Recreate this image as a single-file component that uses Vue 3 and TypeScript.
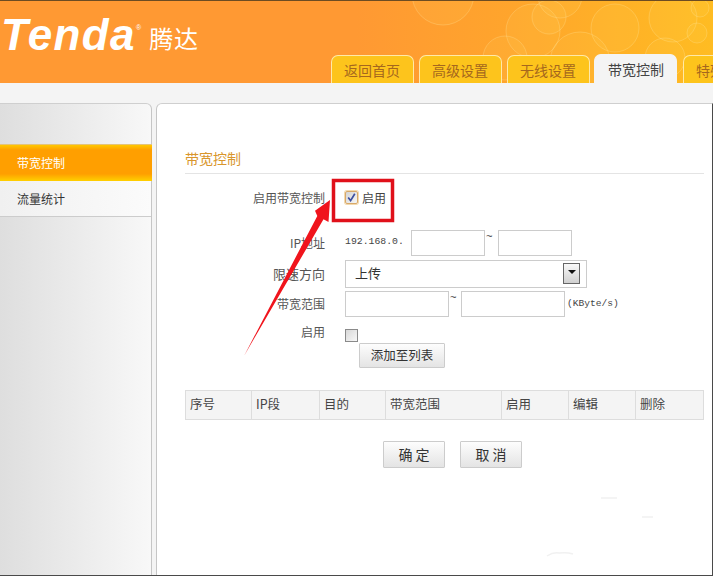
<script setup lang="ts">
const tabs = [
  { label: '返回首页', active: false },
  { label: '高级设置', active: false },
  { label: '无线设置', active: false },
  { label: '带宽控制', active: true },
  { label: '特殊', active: false },
]
const columns = [
  { label: '序号', width: 66 },
  { label: 'IP段', width: 68 },
  { label: '目的', width: 66 },
  { label: '带宽范围', width: 116 },
  { label: '启用', width: 67 },
  { label: '编辑', width: 67 },
  { label: '删除', width: 69 },
]
const bubbles = [
  [443, -6, 31], [533, 31, 27], [549, 17, 17], [505, 58, 22], [580, 62, 30], [615, 28, 24],
  [673, 18, 24], [697, 33, 10], [700, 8, 9], [665, 58, 20], [560, -4, 22],
]
</script>

<template>
  <div class="page">
    <header class="header">
      <svg class="bubbles" width="713" height="83" viewBox="0 0 713 83">
        <circle v-for="(b, i) in bubbles" :key="i" :cx="b[0]" :cy="b[1]" :r="b[2]" class="bubble" />
      </svg>
      <div class="logo">
        <span class="logo-en">Tenda</span><span class="logo-r">®</span><span class="logo-cn">腾达</span>
      </div>
      <nav class="tabs">
        <div v-for="t in tabs" :key="t.label" class="tab" :class="{ active: t.active }">{{ t.label }}</div>
      </nav>
    </header>
    <main class="main">
      <aside class="side">
        <div class="side-item on">带宽控制</div>
        <div class="side-item">流量统计</div>
      </aside>
      <section class="panel">
        <h2 class="title">带宽控制</h2>
        <div class="form">
          <div class="lbl">启用带宽控制</div>
          <div class="ctl">
            <span class="cb checked">
              <svg width="9" height="9" viewBox="0 0 9 9"><path d="M1.2 4.5 L3.6 7.6 L7.8 0.8" fill="none" stroke="#3d4f9f" stroke-width="1.7" /></svg>
            </span>
            <span class="cb-text">启用</span>
          </div>
          <div class="lbl ip-lbl">IP地址</div>
          <div class="ctl ip-row">
            <span class="mono ip">192.168.0.</span>
            <input class="inp w74" type="text" />
            <span class="tilde">~</span>
            <input class="inp w74" type="text" />
          </div>
          <div class="lbl lg">限速方向</div>
          <div class="ctl">
            <div class="select">
              <span class="select-text">上传</span>
              <span class="arrow"><i></i></span>
            </div>
          </div>
          <div class="lbl range-lbl">带宽范围</div>
          <div class="ctl">
            <input class="inp w104" type="text" />
            <span class="tilde tight">~</span>
            <input class="inp w104" type="text" />
            <span class="mono unit">(KByte/s)</span>
          </div>
          <div class="lbl on-lbl">启用</div>
          <div class="ctl end"><span class="cb plain"></span></div>
          <div></div>
          <div class="ctl"><button class="btn add" type="button">添加至列表</button></div>
        </div>
        <div class="table">
          <div v-for="c in columns" :key="c.label" class="cell" :style="{ width: c.width + 'px' }">{{ c.label }}</div>
        </div>
        <div class="actions">
          <button class="btn act" type="button">确 定</button>
          <button class="btn act" type="button">取 消</button>
        </div>
      </section>
    </main>
    <svg class="overlay" width="713" height="576" viewBox="0 0 713 576">
      <rect x="333.5" y="180.5" width="59" height="40" fill="none" stroke="#e0101a" stroke-width="3.5" />
      <path d="M244 356 L317.3 215.9 L315 210.7 L330 200 L328.5 222 L323.5 219.3 Z" fill="#f0141c" />
      <path d="M547 556 q6 -4 12 -3 q8 -1 14 1 M601 498 h16 M642 517 h11" fill="none" stroke="#f1f1f1" stroke-width="1.5" />
    </svg>
  </div>
</template>

<style>
html, body { margin: 0; background: #fff; }
</style>

<style scoped>
.page {
  position: relative;
  width: 713px;
  height: 576px;
  box-sizing: border-box;
  overflow: hidden;
  border-bottom: 1px solid #4a4a4a;
  background: #f4f4f4;
  font-family: "Noto Sans CJK SC", "Liberation Sans", sans-serif;
  font-size: 12px;
  color: #444;
}
.header {
  position: relative;
  height: 83px;
  box-sizing: border-box;
  border-top: 1px solid #6d4c22;
  background: linear-gradient(90deg, #ff9933 0%, #ff9933 50%, #ffa52c 72%, #ffbc22 100%);
  display: flex;
  justify-content: space-between;
  align-items: flex-end;
  overflow: hidden;
}
.bubbles { position: absolute; left: 0; top: -1px; }
.bubble { fill: rgba(255, 225, 110, 0.1); stroke: rgba(255, 235, 170, 0.26); stroke-width: 1; }
.logo {
  position: relative;
  align-self: flex-start;
  display: flex;
  align-items: flex-start;
  margin: 9px 0 0 1px;
  color: #fff;
  white-space: nowrap;
}
.logo-en {
  font-family: "Liberation Sans", sans-serif;
  font-weight: 700;
  font-style: italic;
  font-size: 44px;
  line-height: 50px;
  letter-spacing: 1.4px;
}
.logo-r { font-size: 7px; line-height: 8px; margin: 14px 0 0 0; font-family: "Liberation Sans", sans-serif; }
.logo-cn { font-size: 24px; line-height: 28px; margin: 14px 0 0 8px; letter-spacing: 1px; font-weight: 400; }
.tabs {
  position: relative;
  display: flex;
  align-items: flex-end;
  gap: 5px;
  margin-right: -53px;
}
.tab {
  width: 83px;
  height: 28px;
  box-sizing: border-box;
  border: 1px solid #ffe9a8;
  border-bottom: 0;
  border-radius: 7px 7px 0 0;
  background: #fdc41c;
  color: #a5671e;
  font-size: 14px;
  line-height: 28px;
  text-align: left;
  padding-left: 12px;
  white-space: nowrap;
}
.tab.active {
  height: 29px;
  background: #f4f4f4;
  border-color: #f4f4f4;
  color: #444;
  margin: 0 1px 0 -1px;
  padding-left: 13px;
}
.main {
  display: flex;
  gap: 4px;
  padding-top: 20px;
  height: 492px;
  box-sizing: border-box;
}
.side {
  width: 152px;
  flex: none;
  box-sizing: border-box;
  padding-top: 40px;
  border-top: 1px solid #cfcfcf;
  border-right: 1px solid #c6c6c6;
  border-top-right-radius: 6px;
  background: linear-gradient(90deg, #dedede 0%, #f8f8f8 100%);
}
.side-item {
  height: 36px;
  box-sizing: border-box;
  padding-left: 17px;
  border-bottom: 1px solid #cccccc;
  background: linear-gradient(90deg, #f0f0f0, #fbfbfb);
  color: #333;
  line-height: 35px;
}
.side-item.on {
  height: 37px;
  border-top: 1px solid #e5c478;
  border-bottom: 0;
  margin-right: -1px;
  color: #fff;
  background: linear-gradient(180deg, #ffc800 0%, #ff9f00 14%, #ff9f00 80%, #ffd000 100%);
  line-height: 36px;
}
.panel {
  flex: 1;
  min-width: 0;
  box-sizing: border-box;
  padding: 0 8px 0 28px;
  border-top: 1px solid #cfcfcf;
  border-left: 1px solid #c6c6c6;
  border-right: 1px solid #4a4a4a;
  border-top-left-radius: 6px;
  background: #fff;
}
.title {
  margin: 40px 0 0;
  height: 30px;
  box-sizing: border-box;
  border-bottom: 1px solid #e4e4e4;
  color: #d9962c;
  font-size: 14px;
  font-weight: 400;
  line-height: 29px;
}
.form {
  display: grid;
  grid-template-columns: 140px 1fr;
  grid-template-rows: 47px 32px 29px 26px 20px 25px;
  column-gap: 20px;
  row-gap: 3px;
}
.ip-lbl, .ip-row { margin-top: 6px; }
.lbl { text-align: right; align-self: center; color: #555; line-height: 16px; }
.lbl.lg { font-size: 13px; }
.range-lbl { align-self: start; margin-top: 5px; }
.on-lbl { align-self: start; margin-top: 4px; }
.ctl { display: flex; align-items: center; min-width: 0; }
.ctl.end { align-items: flex-start; padding-top: 9px; box-sizing: border-box; }
.cb {
  width: 13px;
  height: 13px;
  box-sizing: border-box;
  display: inline-flex;
  align-items: center;
  justify-content: center;
  flex: none;
}
.cb.checked { border: 1px solid #d8a868; border-radius: 2px; background: linear-gradient(135deg, #d4d4d4, #f6f6f6); box-shadow: 0 0 0 1px #f3d9ae; }
.cb.plain { border: 1px solid #8a8a8a; background: linear-gradient(135deg, #d8d8d8, #f8f8f8); }
.cb-text { margin-left: 4px; color: #444; }
.mono { font-family: "Liberation Mono", monospace; font-size: 9.8px; color: #444; }
.ip { width: 66px; flex: none; padding-bottom: 4px; }
.inp {
  height: 26px;
  box-sizing: border-box;
  border: 1px solid #cccccc;
  padding: 0;
  margin: 0;
  background: #fff;
  outline: none;
}
.w74 { width: 74px; }
.w104 { width: 104px; }
.tilde { width: 12px; flex: none; align-self: flex-start; font-family: "Liberation Mono", monospace; font-size: 11px; line-height: 10px; margin-top: 2px; padding-left: 1px; box-sizing: border-box; color: #333; margin-right: 1px; }
.tilde.tight { margin-right: 0; }
.unit { margin-left: 2px; margin-top: -2px; font-size: 9.6px; }
.select {
  width: 242px;
  height: 28px;
  box-sizing: border-box;
  border: 1px solid #cccccc;
  display: flex;
  align-items: center;
  justify-content: space-between;
  padding: 0 6px 0 9px;
  color: #333;
  font-size: 13px;
}
.select-text { padding-bottom: 2px; }
.arrow {
  width: 17px;
  height: 21px;
  box-sizing: border-box;
  border: 1px solid #666;
  background: linear-gradient(180deg, #f8f8f8, #d0d0d0);
  display: flex;
  align-items: center;
  justify-content: center;
}
.arrow i {
  display: block;
  border-left: 4px solid transparent;
  border-right: 4px solid transparent;
  border-top: 4px solid #111;
  margin-top: -4px;
}
.btn {
  box-sizing: border-box;
  border: 1px solid #cccccc;
  border-radius: 1px;
  background: linear-gradient(180deg, #fdfdfd, #e4e4e4);
  color: #333;
  font-family: inherit;
  padding: 0 0 2px;
}
.add { width: 86px; height: 25px; margin-left: 14px; font-size: 12.5px; }
.table {
  display: flex;
  margin-top: 22px;
  height: 30px;
  box-sizing: border-box;
  width: 519px;
  border: 1px solid #dddddd;
  background: #f4f4f4;
}
.cell {
  flex: none;
  box-sizing: border-box;
  border-right: 1px solid #dddddd;
  padding-left: 4px;
  color: #444;
  line-height: 26px;
  font-size: 12.5px;
}
.cell:last-child { border-right: 0; }
.actions {
  display: flex;
  gap: 15px;
  margin-top: 21px;
  padding-left: 198px;
}
.act { width: 62px; height: 27px; font-size: 14px; }
.overlay { position: absolute; left: 0; top: 0; pointer-events: none; }
</style>
